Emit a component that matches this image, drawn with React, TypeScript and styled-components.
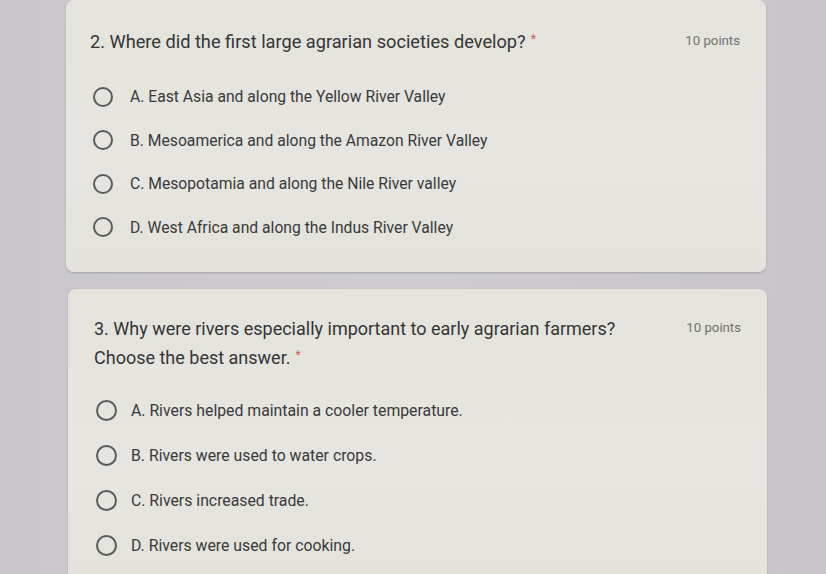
import React from "react";
import styled, { createGlobalStyle } from "styled-components";

const Global = createGlobalStyle`
  html, body { margin: 0; padding: 0; background: #cbc9cc; }
  body { font-family: Roboto, "Liberation Sans", Arial, sans-serif; overflow: hidden; }
`;

const Page = styled.div`
  display: flex;
  flex-direction: column;
  gap: 17px;
  padding: 0 0 0 66px;
  width: 826px;
  height: 574px;
  box-sizing: border-box;
  background: linear-gradient(90deg, #c9c7cb 0%, #cecccf 50%, #c8c5ca 100%);
`;

const Card = styled.section<{ $indent: number; $width: number; $top: number; $bottom: number; $left: number }>`
  margin-left: ${(p) => p.$indent}px;
  width: ${(p) => p.$width}px;
  box-sizing: border-box;
  background: linear-gradient(180deg, #e4e3dc 0%, #e6e5df 60%, #e3e2db 100%);
  border-radius: 8px;
  box-shadow: 0 1px 2px rgba(90, 88, 95, 0.35);
  padding: ${(p) => p.$top}px 26px ${(p) => p.$bottom}px ${(p) => p.$left}px;
  flex-shrink: 0;
`;

const Header = styled.div`
  display: flex;
  justify-content: space-between;
  align-items: flex-start;
`;

const Title = styled.div<{ $size: number; $lh: number }>`
  font-size: ${(p) => p.$size}px;
  line-height: ${(p) => p.$lh}px;
  color: #353535;
  font-weight: 400;
`;

const Star = styled.span`
  position: relative;
  top: -5px;
  color: #c8615a;
  font-size: 12px;
  line-height: 0;
  margin-left: 5px;
`;

const Points = styled.div<{ $top: number }>`
  font-size: 13.2px;
  line-height: 16px;
  color: #727272;
  padding-top: ${(p) => p.$top}px;
  white-space: nowrap;
`;

const Options = styled.div<{ $gap: number }>`
  display: flex;
  flex-direction: column;
  margin-top: ${(p) => p.$gap}px;
`;

const Option = styled.label<{ $h: number; $pad: number; $gap: number }>`
  display: flex;
  align-items: center;
  height: ${(p) => p.$h}px;
  padding-left: ${(p) => p.$pad}px;
  gap: ${(p) => p.$gap}px;
`;

const Radio = styled.span<{ $d: number }>`
  width: ${(p) => p.$d}px;
  height: ${(p) => p.$d}px;
  box-sizing: border-box;
  border: 2.2px solid #5b5b5b;
  border-radius: 50%;
  flex-shrink: 0;
`;

const OptionText = styled.span<{ $size: number }>`
  font-size: ${(p) => p.$size}px;
  color: #3a3a3a;
`;

const q2 = [
  "A. East Asia and along the Yellow River Valley",
  "B. Mesoamerica and along the Amazon River Valley",
  "C. Mesopotamia and along the Nile River valley",
  "D. West Africa and along the Indus River Valley",
];

const q3 = [
  "A. Rivers helped maintain a cooler temperature.",
  "B. Rivers were used to water crops.",
  "C. Rivers increased trade.",
  "D. Rivers were used for cooking.",
];

export default function App() {
  return (
    <>
      <Global />
      <Page>
        <Card $indent={0} $width={700} $top={30} $bottom={23} $left={24}>
          <Header>
            <Title $size={18.2} $lh={24}>
              2. Where did the first large agrarian societies develop?<Star>*</Star>
            </Title>
            <Points $top={3}>10 points</Points>
          </Header>
          <Options $gap={21}>
            {q2.map((t) => (
              <Option key={t} $h={43.5} $pad={3} $gap={17}>
                <Radio $d={20} />
                <OptionText $size={15.7}>{t}</OptionText>
              </Option>
            ))}
          </Options>
        </Card>
        <Card $indent={2} $width={699} $top={25} $bottom={20} $left={26}>
          <Header>
            <Title $size={18} $lh={29}>
              3. Why were rivers especially important to early agrarian farmers?
              <br />
              Choose the best answer.<Star>*</Star>
            </Title>
            <Points $top={6}>10 points</Points>
          </Header>
          <Options $gap={15.5}>
            {q3.map((t) => (
              <Option key={t} $h={45} $pad={2} $gap={14}>
                <Radio $d={21} />
                <OptionText $size={15.8}>{t}</OptionText>
              </Option>
            ))}
          </Options>
        </Card>
      </Page>
    </>
  );
}
